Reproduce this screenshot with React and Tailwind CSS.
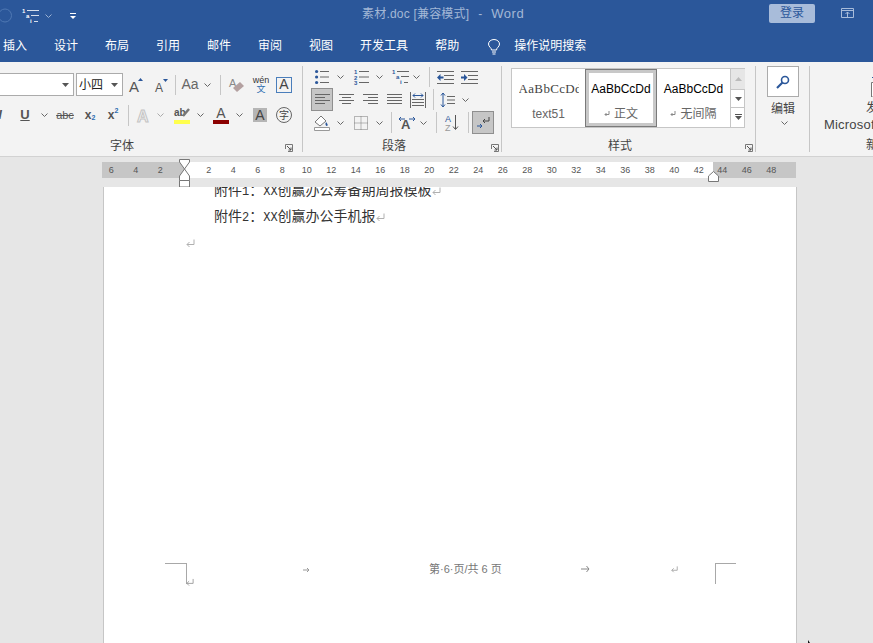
import React from "react";

const BLUE = "#2b579a";
const GRAY = "#666666";

const tabs = [
  ["插入", "ml-[3px]"],
  ["设计", "ml-[27px]"],
  ["布局", "ml-[27px]"],
  ["引用", "ml-[27px]"],
  ["邮件", "ml-[27px]"],
  ["审阅", "ml-[27px]"],
  ["视图", "ml-[27px]"],
  ["开发工具", "ml-[27px]"],
  ["帮助", "ml-[27px]"],
];

const leftMarks = ["6", "4", "2"];
const midMarks = ["2", "4", "6", "8", "10", "12", "14", "16", "18", "20", "22", "24", "26", "28", "30", "32", "34", "36", "38", "40", "42"];
const rightMarks = ["44", "46", "48"];

function Cell({ className = "", children }) {
  return <div className={`flex items-center justify-center shrink-0 h-full ${className}`}>{children}</div>;
}

function Sep({ className = "" }) {
  return <div className={`w-px shrink-0 self-center bg-[#c6c6c6] ${className}`} />;
}

function Chev({ color = GRAY }) {
  return (
    <svg width="7" height="4" viewBox="0 0 7 4">
      <path d="M0.5 0.5 L3.5 3.5 L6.5 0.5" fill="none" stroke={color} />
    </svg>
  );
}

function Caret() {
  return (
    <svg width="7" height="4" viewBox="0 0 7 4">
      <path d="M0 0 H7 L3.5 4 Z" fill="#555" />
    </svg>
  );
}

function Launcher({ className = "" }) {
  return (
    <svg className={`shrink-0 ${className}`} width="8" height="8" viewBox="0 0 8 8">
      <path d="M0.5 5 V0.5 H7.5 V7.5 H3" fill="none" stroke="#777" />
      <path d="M2 2 L6 6 M6 3.5 V6 H3.5" fill="none" stroke="#555" />
    </svg>
  );
}

function GroupLabel({ text, className = "", launcher = "" }) {
  return (
    <div className="flex items-center h-[14px] text-[12px] leading-[14px] text-[#444]">
      <span className={className}>{text}</span>
      {launcher && <Launcher className={`mt-[4px] ${launcher}`} />}
    </div>
  );
}

function MultiList({ color = BLUE, line = GRAY }) {
  return (
    <svg className="overflow-visible" width="17" height="16" viewBox="0 0 17 16">
      <text x="0" y="5" fontSize="6" fontWeight="700" fill={color}>1</text>
      <path d="M5 2.5 H17" stroke={line} />
      <text x="4" y="10" fontSize="6" fontWeight="700" fill={color}>a</text>
      <path d="M9 7.5 H17" stroke={line} />
      <text x="8" y="15" fontSize="6" fontWeight="700" fill={color}>i</text>
      <path d="M12 13.5 H16" stroke={line} />
    </svg>
  );
}

function Bullets() {
  return (
    <svg width="14" height="16" viewBox="0 0 14 16">
      <circle cx="1.6" cy="2.5" r="1.6" fill={BLUE} />
      <circle cx="1.6" cy="8" r="1.6" fill={BLUE} />
      <circle cx="1.6" cy="13.5" r="1.6" fill={BLUE} />
      <path d="M5 2.5 H14 M5 8 H14 M5 13.5 H14" stroke={GRAY} />
    </svg>
  );
}

function Numbered() {
  return (
    <svg className="overflow-visible" width="15" height="16" viewBox="0 0 15 16">
      <text x="0" y="5" fontSize="6" fontWeight="700" fill={BLUE}>1</text>
      <text x="0" y="10.5" fontSize="6" fontWeight="700" fill={BLUE}>2</text>
      <text x="0" y="16" fontSize="6" fontWeight="700" fill={BLUE}>3</text>
      <path d="M5 2.5 H15 M5 8 H15 M5 13.5 H15" stroke={GRAY} />
    </svg>
  );
}

function Indent({ flip }) {
  return (
    <svg width="17" height="13" viewBox="0 0 17 13">
      <path d="M0 0.5 H17 M7 4.5 H17 M7 8.5 H17 M0 12.5 H17" stroke={GRAY} />
      {flip ? (
        <path d="M0 5.5 H3 V3 L6.5 6.5 L3 10 V7.5 H0 Z" fill={BLUE} />
      ) : (
        <path d="M6.5 5.5 H3.5 V3 L0 6.5 L3.5 10 V7.5 H6.5 Z" fill={BLUE} />
      )}
    </svg>
  );
}

function Align({ d }) {
  return (
    <svg width="15" height="11" viewBox="0 0 15 11">
      <path d={d} stroke={GRAY} fill="none" />
    </svg>
  );
}

function StyleItem({ sample, label, mark, sampleClass = "", labelClass = "" }) {
  return (
    <div className={`h-full flex flex-col items-center shrink-0 ${labelClass}`}>
      <div className={`mt-[12px] h-[16px] leading-[16px] ${sampleClass}`}>{sample}</div>
      <div className="mt-[10px] flex items-center gap-[4px] text-[12px] leading-[14px] text-[#666]">
        {mark && (
          <svg width="6" height="6" viewBox="0 0 6 6">
            <path d="M5 0 V3.5 H1 M2.5 2 L1 3.5 L2.5 5" fill="none" stroke="#888" />
          </svg>
        )}
        {label}
      </div>
    </div>
  );
}

function Para({ width = 9, color = "#b0b0b0" }) {
  return (
    <svg width={width} height="9" viewBox="0 0 9 9" className="shrink-0">
      <path d="M8 0.5 V5.5 H1 M3.5 3 L1 5.5 L3.5 8" fill="none" stroke={color} />
    </svg>
  );
}

export default function App() {
  return (
    <div className="relative flex flex-col w-[873px] h-screen overflow-hidden bg-[#e6e6e6] font-['Liberation_Sans','Noto_Sans_CJK_SC',sans-serif]">
      {/* title bar */}
      <div className="flex items-center h-[31px] shrink-0 bg-[#2b579a]">
        <svg className="shrink-0 ml-[-2px]" width="15" height="15" viewBox="0 0 15 15">
          <circle cx="7" cy="7.5" r="6.5" fill="none" stroke="#4f78b3" />
        </svg>
        <div className="ml-[9px] w-[17px] flex"><MultiList color="#ffffff" line="#d5deeb" /></div>
        <div className="ml-[6px] flex"><Chev color="#9db3d3" /></div>
        <svg className="ml-[18px] shrink-0" width="6" height="6" viewBox="0 0 6 6">
          <path d="M0 0.5 H6" stroke="#fff" />
          <path d="M0 3 H6 L3 6 Z" fill="#fff" />
        </svg>
        <div className="ml-[286px] -mt-[3px] w-[163px] shrink-0 flex items-center whitespace-pre text-[12px] text-[#a3b7d6]">
          <span className="tracking-[0.2px]">素材.doc [兼容模式]</span>
          <span className="ml-[9px]">-</span>
          <span className="ml-[9px] text-[13px] tracking-[0.5px]">Word</span>
        </div>
        <div className="ml-[244px] w-[46px] h-[19px] shrink-0 -mt-[5px] flex items-center justify-center rounded-[2px] bg-[#a8bcda] text-[12px] text-[#2b579a]">
          登录
        </div>
        <svg className="ml-[26px] shrink-0 -mt-[5px]" width="13" height="10" viewBox="0 0 13 10">
          <path d="M0.5 0.5 H12.5 V9.5 H0.5 Z M0.5 2.5 H12.5" fill="none" stroke="#a8bcda" />
          <path d="M6.5 9 V4 M4.5 6 L6.5 4 L8.5 6" fill="none" stroke="#a8bcda" />
        </svg>
      </div>

      {/* tabs */}
      <div className="flex items-center h-[31px] shrink-0 pb-[2px] bg-[#2b579a] text-[12px] text-white">
        {tabs.map(([name, cls]) => (
          <div key={name} className={`shrink-0 ${cls}`}>
            {name}
          </div>
        ))}
        <svg className="ml-[29px] mt-[2px] shrink-0" width="12" height="16" viewBox="0 0 12 16">
          <path d="M3.5 11 C3.5 8.5 0.5 8 0.5 5 C0.5 2.5 3 0.5 6 0.5 C9 0.5 11.5 2.5 11.5 5 C11.5 8 8.5 8.5 8.5 11 Z M4 13 H8 M4.5 15 H7.5" fill="none" stroke="#fff" />
        </svg>
        <div className="ml-[14px] shrink-0">操作说明搜索</div>
      </div>

      {/* ribbon */}
      <div className="flex h-[95px] shrink-0 overflow-hidden bg-[#f3f3f3] border-b border-[#d2d2d2]">
        {/* font group */}
        <div className="w-[303px] shrink-0 h-[86px] mt-[4px] border-r border-[#c6c6c6]">
          <div className="flex h-[23px] mt-[7px]">
            <div className="w-[74px] h-[23px] shrink-0 flex items-center justify-end pr-[4px] bg-white border border-l-0 border-[#ababab]"><Caret /></div>
            <div className="ml-[2px] w-[47px] h-[23px] shrink-0 flex items-center justify-between pl-[2px] pr-[4px] bg-white border border-[#ababab] text-[12px] text-[#222]">
              小四<Caret />
            </div>
            <Cell className="ml-[4px] w-[20px]">
              <svg className="overflow-visible" width="16" height="16" viewBox="0 0 16 16">
                <text x="0" y="15" fontSize="15" fill="#555">A</text>
                <path d="M9 4 L11.5 1 L14 4 Z" fill={BLUE} />
              </svg>
            </Cell>
            <Cell className="ml-[5px] w-[20px]">
              <svg className="overflow-visible" width="14" height="16" viewBox="0 0 14 16">
                <text x="0" y="15" fontSize="12" fill="#555">A</text>
                <path d="M8 2 H13 L10.5 5 Z" fill={BLUE} />
              </svg>
            </Cell>
            <Sep className="ml-[3px] h-[20px]" />
            <Cell className="ml-[4px] w-[20px] text-[14px] text-[#666]">Aa</Cell>
            <Cell className="ml-[1px] w-[12px]"><Chev /></Cell>
            <Sep className="ml-[7px] h-[20px]" />
            <Cell className="ml-[6px] w-[20px]">
              <svg className="overflow-visible" width="16" height="16" viewBox="0 0 16 16">
                <text x="0" y="10" fontSize="11" fill="#888">A</text>
                <path d="M4 11 L11 5 L15 9 L8 15 Z" fill="#b3a0a0" />
              </svg>
            </Cell>
            <Cell className="ml-[4px] w-[20px]">
              <div className="flex flex-col items-center text-[9px] leading-[9px]">
                <span className="text-[#333]">wén</span>
                <span className="text-[#2b6cb0]">文</span>
              </div>
            </Cell>
            <Cell className="ml-[3px] w-[20px]">
              <div className="flex items-center justify-center w-[16px] h-[16px] border border-[#4a7ebb] text-[14px] text-[#444]">A</div>
            </Cell>
          </div>
          <div className="flex h-[22px] mt-[8px]">
            <Cell className="ml-[-10px] w-[20px] text-[13px] italic font-bold text-[#555]">I</Cell>
            <Cell className="ml-[5px] w-[20px] text-[13px] font-bold underline text-[#555]">U</Cell>
            <Cell className="ml-[3px] w-[12px]"><Chev /></Cell>
            <Cell className="ml-[5px] w-[20px] text-[11px] line-through text-[#555]">abc</Cell>
            <Cell className="ml-[5px] w-[20px] text-[12px] font-bold text-[#555]">
              x<span className="mt-[7px] text-[7px] text-[#2b6cb0]">2</span>
            </Cell>
            <Cell className="ml-[3px] w-[20px] text-[12px] font-bold text-[#555]">
              x<span className="mb-[7px] text-[7px] text-[#2b6cb0]">2</span>
            </Cell>
            <Sep className="ml-[5px] h-[21px]" />
            <Cell className="ml-[5px] w-[20px]">
              <svg className="overflow-visible" width="14" height="15" viewBox="0 0 14 15">
                <text x="0" y="14" fontSize="16" fontWeight="700" fill="#f3f3f3" stroke="#c4c4c4" strokeWidth="1">A</text>
              </svg>
            </Cell>
            <Cell className="w-[12px]"><Chev color="#aaaaaa" /></Cell>
            <Cell className="ml-[6px] w-[20px]">
              <svg className="overflow-visible" width="16" height="17" viewBox="0 0 16 17">
                <text x="0" y="9" fontSize="10" fontWeight="700" fill="#555">ab</text>
                <path d="M9 9 L15 2" stroke="#777" strokeWidth="2.5" />
                <path d="M0 13 H16 V17 H0 Z" fill="#ffff4d" />
              </svg>
            </Cell>
            <Cell className="ml-[2px] w-[12px]"><Chev /></Cell>
            <Cell className="ml-[5px] w-[20px]">
              <div className="flex flex-col items-center">
                <span className="text-[14px] leading-[13px] text-[#555]">A</span>
                <div className="w-[16px] h-[4px] bg-[#8b0000]" />
              </div>
            </Cell>
            <Cell className="ml-[2px] w-[12px]"><Chev /></Cell>
            <Cell className="ml-[5px] w-[20px]">
              <div className="flex items-center justify-center w-[14px] h-[14px] bg-[#b5b5b5] text-[14px] text-[#444]">A</div>
            </Cell>
            <Cell className="ml-[4px] w-[20px]">
              <div className="flex items-center justify-center w-[16px] h-[16px] rounded-full border border-[#666] text-[10px] text-[#444]">字</div>
            </Cell>
          </div>
          <div className="mt-[13px]">
            <GroupLabel text="字体" className="ml-[110px]" launcher="ml-[151px]" />
          </div>
        </div>

        {/* paragraph group */}
        <div className="w-[199px] shrink-0 h-[86px] mt-[4px] border-r border-[#c6c6c6]">
          <div className="flex h-[22px]">
            <Cell className="ml-[9px] w-[20px]"><Bullets /></Cell>
            <Cell className="w-[16px]"><Chev /></Cell>
            <Cell className="ml-[3px] w-[20px]"><Numbered /></Cell>
            <Cell className="w-[16px]"><Chev /></Cell>
            <Cell className="ml-[3px] w-[20px]"><MultiList /></Cell>
            <Cell className="w-[12px]"><Chev /></Cell>
            <Sep className="ml-[7px] h-[20px]" />
            <Cell className="ml-[5px] w-[20px]"><Indent /></Cell>
            <Cell className="ml-[4px] w-[20px]"><Indent flip /></Cell>
          </div>
          <div className="flex h-[23px]">
            <Cell className="ml-[8px] w-[22px] h-[22px] bg-[#c6c6c6] border border-[#8f8f8f]">
              <Align d="M0 0.5 H15 M0 3.5 H10 M0 6.5 H15 M0 9.5 H10" />
            </Cell>
            <Cell className="ml-[3px] w-[20px]"><Align d="M0 0.5 H15 M3 3.5 H12 M0 6.5 H15 M3 9.5 H12" /></Cell>
            <Cell className="ml-[4px] w-[20px]"><Align d="M0 0.5 H15 M5 3.5 H15 M0 6.5 H15 M5 9.5 H15" /></Cell>
            <Cell className="ml-[4px] w-[20px]"><Align d="M0 0.5 H15 M0 3.5 H15 M0 6.5 H15 M0 9.5 H15" /></Cell>
            <Cell className="ml-[4px] w-[20px]">
              <svg width="16" height="16" viewBox="0 0 16 16">
                <path d="M0.5 0 V16 M15.5 0 V16 M2 7.5 H14 M2 10.5 H14 M2 13.5 H14" stroke={GRAY} fill="none" />
                <path d="M3 3.5 H13 M5 1.5 L3 3.5 L5 5.5 M11 1.5 L13 3.5 L11 5.5" stroke={BLUE} fill="none" />
              </svg>
            </Cell>
            <Sep className="ml-[5px] h-[21px]" />
            <Cell className="ml-[3px] w-[20px]">
              <svg width="15" height="16" viewBox="0 0 15 16">
                <path d="M3 1 V15 M1 3.5 L3 1 L5 3.5 M1 12.5 L3 15 L5 12.5" stroke={BLUE} fill="none" />
                <path d="M7 4.5 H15 M7 8 H15 M7 11.5 H15" stroke={GRAY} />
              </svg>
            </Cell>
            <Cell className="ml-[2px] w-[12px]"><Chev /></Cell>
          </div>
          <div className="flex h-[23px]">
            <Cell className="ml-[9px] w-[20px]">
              <svg width="16" height="17" viewBox="0 0 16 17">
                <path d="M1 8 L7 2 L12 7 L6 12 Z" fill="#fff" stroke="#777" />
                <path d="M12 8 C13.5 10 14.5 11 13 12 C11.5 12 11 10 12 8 Z" fill={BLUE} />
                <path d="M0.5 13.5 H15.5 V16.5 H0.5 Z" fill="#fff" stroke="#999" />
              </svg>
            </Cell>
            <Cell className="w-[16px]"><Chev /></Cell>
            <Cell className="ml-[3px] w-[20px]">
              <svg width="14" height="14" viewBox="0 0 14 14">
                <path d="M0.5 0.5 H13.5 V13.5 H0.5 Z M7 0.5 V13.5 M0.5 7 H13.5" fill="none" stroke="#777" strokeDasharray="1 1" />
              </svg>
            </Cell>
            <Cell className="w-[16px]"><Chev /></Cell>
            <Sep className="ml-[4px] h-[21px]" />
            <Cell className="ml-[4px] w-[22px]">
              <svg className="overflow-visible" width="18" height="15" viewBox="0 0 18 15">
                <text x="3" y="14" fontSize="13" fontWeight="700" fill="#555">A</text>
                <path d="M1 4 H7 M3 2 L1 4 L3 6 M11 4 H17 M15 2 L17 4 L15 6" fill="none" stroke={BLUE} />
              </svg>
            </Cell>
            <Cell className="w-[10px]"><Chev /></Cell>
            <Sep className="ml-[8px] h-[21px]" />
            <Cell className="ml-[5px] w-[20px]">
              <svg className="overflow-visible" width="14" height="17" viewBox="0 0 14 17">
                <text x="0" y="8" fontSize="9" fill={BLUE}>A</text>
                <text x="0" y="16.5" fontSize="9" fill="#999">Z</text>
                <path d="M10.5 1 V15 M8 12.5 L10.5 15.5 L13 12.5" fill="none" stroke="#555" />
              </svg>
            </Cell>
            <Sep className="ml-[6px] h-[21px]" />
            <Cell className="ml-[3px] w-[22px] h-[23px] bg-[#c6c6c6] border border-[#8f8f8f]">
              <svg width="13" height="12" viewBox="0 0 13 12">
                <path d="M12 0 V4 H6 M8 2 L6 4 L8 6" fill="none" stroke="#444" />
                <path d="M0 9 H5 M3 7 L5 9 L3 11" fill="none" stroke={BLUE} />
              </svg>
            </Cell>
          </div>
          <div className="mt-[5px]">
            <GroupLabel text="段落" className="ml-[79px]" launcher="ml-[85px]" />
          </div>
        </div>

        {/* styles group */}
        <div className="w-[254px] shrink-0 h-[86px] mt-[4px] border-r border-[#c6c6c6]">
          <div className="flex ml-[9px] mt-[2px] w-[234px] h-[60px] bg-white border border-[#c6c6c6]">
            <StyleItem
              sample="AaBbCcDd"
              label="text51"
              labelClass="w-[73px] overflow-hidden"
              sampleClass="w-[60px] overflow-hidden whitespace-nowrap font-['Liberation_Serif'] text-[13px] tracking-[0.35px] text-[#444]"
            />
            <div className="w-[72px] h-full shrink-0 border border-[#7a7a7a]">
              <div className="h-full border-[3px] border-[#c8c8c8]">
                <StyleItem sample="AaBbCcDd" label="正文" mark labelClass="-mt-[4px]" sampleClass="text-[12px] text-black" />
              </div>
            </div>
            <StyleItem sample="AaBbCcDd" label="无间隔" mark labelClass="w-[73px]" sampleClass="text-[12px] text-black" />
            <div className="flex flex-col w-[15px] shrink-0 border-l border-[#c6c6c6]">
              <div className="flex items-center justify-center h-[20px] bg-[#e6e6e6]">
                <svg width="7" height="4" viewBox="0 0 7 4"><path d="M3.5 0 L7 4 H0 Z" fill="#bbb" /></svg>
              </div>
              <div className="flex items-center justify-center h-[19px] border-y border-[#c6c6c6]"><Caret /></div>
              <div className="flex flex-col items-center justify-center gap-[1px] h-[18px]">
                <div className="w-[7px] h-px bg-[#555]" />
                <Caret />
              </div>
            </div>
          </div>
          <div className="mt-[11px]">
            <GroupLabel text="样式" className="ml-[106px]" launcher="ml-[113px]" />
          </div>
        </div>

        {/* editing group */}
        <div className="w-[54px] shrink-0 h-[86px] mt-[4px] border-r border-[#c6c6c6] flex flex-col">
          <div className="flex items-center justify-center ml-[11px] w-[32px] h-[31px] bg-white border border-[#ababab]">
            <svg width="14" height="14" viewBox="0 0 14 14">
              <circle cx="9" cy="5" r="3.5" fill="none" stroke={BLUE} strokeWidth="1.6" />
              <path d="M6.5 7.5 L1 13" stroke={BLUE} strokeWidth="2.2" />
            </svg>
          </div>
          <div className="ml-[15px] mt-[5px] text-[12px] leading-[14px] text-[#444]">编辑</div>
          <div className="ml-[25px] mt-[5px] flex"><Chev /></div>
        </div>

        {/* clipped add-in group */}
        <div className="flex-1 min-w-0 h-[86px] mt-[4px] overflow-hidden text-[12px] leading-[14px] text-[#444]">
          <svg className="ml-[61px] mt-[7px]" width="10" height="24" viewBox="0 0 10 24">
            <path d="M1 5 L5 1 L9 5" fill="none" stroke={BLUE} />
            <path d="M0.5 9.5 H10 V24 H0.5 Z" fill="#fff" stroke="#777" />
          </svg>
          <div className="ml-[56px] mt-[4px] whitespace-nowrap">发</div>
          <div className="ml-[14px] mt-[3px] whitespace-nowrap text-[13px] tracking-[0.2px]">Microsoft</div>
          <div className="ml-[56px] mt-[6px] whitespace-nowrap">新</div>
        </div>
      </div>

      {/* ruler */}
      <div className="relative h-[30px] shrink-0 pt-[5px] pl-[102px] bg-[#e6e6e6]">
        <div className="flex w-[694px] h-[16px] text-[9px] leading-[16px] text-[#555]">
          <div className="flex w-[82px] shrink-0 bg-[#c6c6c6]">
            <div className="flex -ml-[3px]">
              {leftMarks.map((m) => (
                <div key={m} className="w-[24.5px] shrink-0 text-center">{m}</div>
              ))}
            </div>
          </div>
          <div className="flex w-[529px] shrink-0 pl-[12.5px] bg-white">
            {midMarks.map((m) => (
              <div key={m} className="w-[24.5px] shrink-0 text-center">{m}</div>
            ))}
          </div>
          <div className="flex flex-1 bg-[#c6c6c6]">
            <div className="flex -ml-[3px]">
              {rightMarks.map((m) => (
                <div key={m} className="w-[24.5px] shrink-0 text-center">{m}</div>
              ))}
            </div>
          </div>
        </div>
        <svg className="absolute left-[179px] top-[2px]" width="11" height="28" viewBox="0 0 11 28">
          <path d="M0.5 0.5 H10.5 V3 L5.5 10 L0.5 3 Z M5.5 10 L10.5 17 V21.5 H0.5 V17 Z M0.5 21.5 V28 H10.5 V21.5" fill="#fff" stroke="#777" />
        </svg>
        <svg className="absolute left-[708px] top-[14px]" width="11" height="11" viewBox="0 0 11 11">
          <path d="M0.5 5 L5.5 0.5 L10.5 5 V10.5 H0.5 Z" fill="#fff" stroke="#777" />
        </svg>
      </div>

      {/* page */}
      <div className="flex-1 min-h-0 ml-[103px] w-[694px] overflow-hidden bg-white border-x border-[#c6c6c6]">
        <div className="-mt-[9px] text-[14px] leading-[26px] text-[#333]">
          <div className="flex items-center h-[26px] ml-[110px]">
            <span>
              附件<span className="font-['Liberation_Mono'] text-[12px]">1</span>：<span className="font-['Liberation_Mono'] text-[12px]">XX</span>创赢办公筹备期周报模板
            </span>
            <Para />
          </div>
          <div className="flex items-center h-[26px] ml-[110px]">
            <span>
              附件<span className="font-['Liberation_Mono'] text-[12px]">2</span>：<span className="font-['Liberation_Mono'] text-[12px]">XX</span>创赢办公手机报
            </span>
            <Para />
          </div>
          <div className="flex items-center h-[26px] ml-[82px]"><Para /></div>
        </div>
        <div className="flex items-start mt-[307px] text-[11px] leading-[12px] text-[#777]">
          <div className="ml-[61px] w-[22px] h-[21px] shrink-0 border-t border-r border-[#a8a8a8]" />
          <div className="-ml-[1px] mt-[15px] shrink-0 flex"><Para width={8} color="#999" /></div>
          <svg className="ml-[109px] mt-[4px] shrink-0" width="7" height="6" viewBox="0 0 7 6">
            <path d="M0 3 H6 M4 1 L6 3 L4 5" fill="none" stroke="#999" />
          </svg>
          <div className="ml-[119px] w-[72px] shrink-0 whitespace-pre">第·6·页/共 6 页</div>
          <svg className="ml-[80px] mt-[2px] shrink-0" width="9" height="8" viewBox="0 0 9 8">
            <path d="M0 4 H8 M5.5 1 L8 4 L5.5 7" fill="none" stroke="#888" />
          </svg>
          <div className="ml-[81px] mt-[2px] shrink-0 flex"><Para width={7} color="#999" /></div>
          <div className="ml-[37px] w-[21px] h-[21px] shrink-0 border-t border-l border-[#a8a8a8]" />
        </div>
      </div>

      {/* mouse pointer */}
      <svg className="absolute left-[808px] top-[640px]" width="6" height="6" viewBox="0 0 6 6">
        <path d="M0 0 V6 H4 Z" fill="#111" />
      </svg>
    </div>
  );
}
